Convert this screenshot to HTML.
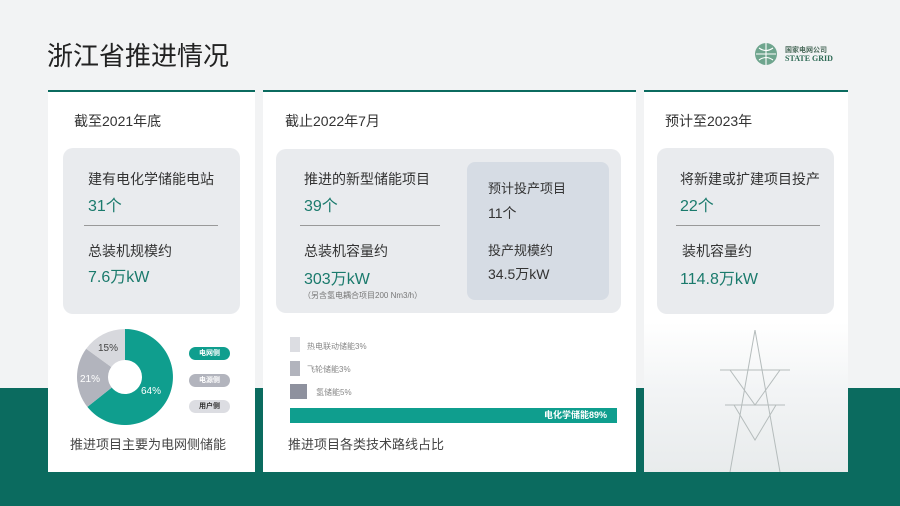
<!DOCTYPE html>
<html><head><meta charset="utf-8"><style>
*{margin:0;padding:0;box-sizing:border-box}
body{width:900px;height:506px;position:relative;overflow:hidden;background:#f2f3f4;font-family:"Liberation Sans","Noto Sans CJK SC",sans-serif;color:#333}
.abs{position:absolute}
.band{left:0;top:388px;width:900px;height:118px;background:#0b6b5f}
.card{background:#fff;border-top:2px solid #0b6b5f;top:90px;height:382px}
.panel{background:#e9ebee;border-radius:10px}
.t{font-size:14px;color:#333;white-space:nowrap}
.g{color:#1a7a6c;font-size:16px;white-space:nowrap}
.hr{height:1px;background:#999}
</style></head><body>
<div class="abs band"></div>
<div class="abs" style="left:47px;top:36px;font-size:26px;color:#222">浙江省推进情况</div>
<svg class="abs" style="left:754px;top:42px" width="24" height="24"><circle cx="12" cy="12" r="11" fill="#6fa58e"/><path d="M2 12h20M12 1v22M5 6q7 5 14 0M5 18q7-5 14 0" stroke="#fff" stroke-width="1.1" fill="none"/></svg>
<div class="abs" style="left:785px;top:45px;font-size:7px;color:#4a6a5a;font-weight:bold">国家电网公司</div>
<div class="abs" style="left:785px;top:54px;font-size:8px;color:#2e6a55;font-weight:bold;font-family:'Liberation Serif',serif">STATE GRID</div>

<div class="abs card" style="left:48px;width:207px"></div>
<div class="abs card" style="left:263px;width:373px"></div>
<div class="abs card" style="left:644px;width:204px;background:linear-gradient(#fff 0,#fff 230px,#f2f4f5 300px,#e8ebec 382px)"></div>
<svg class="abs" style="left:700px;top:330px" width="110" height="142"><g stroke="#b5bcbc" stroke-width="1" fill="none"><path d="M55 0L30 142M55 0L80 142M20 40h70M25 75h60M30 40L55 75L80 40M34 75L55 110L76 75"/></g></svg>

<div class="abs t" style="left:74px;top:111px">截至2021年底</div>
<div class="abs t" style="left:285px;top:111px">截止2022年7月</div>
<div class="abs t" style="left:665px;top:111px">预计至2023年</div>

<div class="abs panel" style="left:63px;top:148px;width:177px;height:166px"></div>
<div class="abs t" style="left:88px;top:169px">建有电化学储能电站</div>
<div class="abs g" style="left:88px;top:192px">31个</div>
<div class="abs hr" style="left:84px;top:225px;width:134px"></div>
<div class="abs t" style="left:88px;top:241px">总装机规模约</div>
<div class="abs g" style="left:88px;top:263px">7.6万kW</div>

<div class="abs panel" style="left:276px;top:149px;width:345px;height:164px"></div>
<div class="abs" style="left:467px;top:162px;width:142px;height:138px;background:#d6dce4;border-radius:8px"></div>
<div class="abs t" style="left:304px;top:169px">推进的新型储能项目</div>
<div class="abs g" style="left:304px;top:192px">39个</div>
<div class="abs hr" style="left:300px;top:225px;width:140px"></div>
<div class="abs t" style="left:304px;top:241px">总装机容量约</div>
<div class="abs g" style="left:304px;top:265px">303万kW</div>
<div class="abs" style="left:303px;top:290px;font-size:8px;color:#777">（另含氢电耦合项目200 Nm3/h）</div>
<div class="abs" style="left:488px;top:178px;font-size:13px">预计投产项目</div>
<div class="abs" style="left:488px;top:203px;font-size:14px">11个</div>
<div class="abs" style="left:488px;top:240px;font-size:13px">投产规模约</div>
<div class="abs" style="left:488px;top:264px;font-size:14px">34.5万kW</div>

<div class="abs panel" style="left:657px;top:148px;width:177px;height:166px"></div>
<div class="abs t" style="left:680px;top:169px">将新建或扩建项目投产</div>
<div class="abs g" style="left:680px;top:192px">22个</div>
<div class="abs hr" style="left:676px;top:225px;width:144px"></div>
<div class="abs t" style="left:682px;top:241px">装机容量约</div>
<div class="abs g" style="left:680px;top:265px">114.8万kW</div>

<svg class="abs" style="left:75px;top:327px" width="100" height="100" viewBox="-50 -50 100 100">
<path d="M0-48A48 48 0 1 1-37.6 29.9L0 0Z" fill="#0f9e8e"/>
<path d="M-37.6 29.9A48 48 0 0 1-38.8-28.2L0 0Z" fill="#b2b4bd"/>
<path d="M-38.8-28.2A48 48 0 0 1 0-48L0 0Z" fill="#d7d8dd"/>
<circle r="17" fill="#fff"/>
<text x="16" y="17" font-size="10" fill="#fff" font-family="Liberation Sans">64%</text>
<text x="-45" y="5" font-size="10" fill="#fff" font-family="Liberation Sans">21%</text>
<text x="-27" y="-26" font-size="10" fill="#444" font-family="Liberation Sans">15%</text>
</svg>
<div class="abs" style="left:189px;top:347px;width:41px;height:13px;border-radius:7px;background:#0f9e8e;color:#fff;font-size:7px;text-align:center;line-height:13px;font-weight:bold">电网侧</div>
<div class="abs" style="left:189px;top:374px;width:41px;height:13px;border-radius:7px;background:#b2b4bd;color:#fff;font-size:7px;text-align:center;line-height:13px;font-weight:bold">电源侧</div>
<div class="abs" style="left:189px;top:400px;width:41px;height:13px;border-radius:7px;background:#dcdde2;color:#333;font-size:7px;text-align:center;line-height:13px;font-weight:bold">用户侧</div>
<div class="abs" style="left:70px;top:434px;font-size:13px;color:#444">推进项目主要为电网侧储能</div>

<div class="abs" style="left:290px;top:337px;width:10px;height:15px;background:#dcdde2"></div>
<div class="abs" style="left:307px;top:341px;font-size:8px;color:#888">热电联动储能3%</div>
<div class="abs" style="left:290px;top:361px;width:10px;height:15px;background:#b2b4bd"></div>
<div class="abs" style="left:307px;top:364px;font-size:8px;color:#888">飞轮储能3%</div>
<div class="abs" style="left:290px;top:384px;width:17px;height:15px;background:#8e919e"></div>
<div class="abs" style="left:316px;top:387px;font-size:8px;color:#888">氢储能5%</div>
<div class="abs" style="left:290px;top:408px;width:327px;height:15px;background:#0f9e8e;color:#fff;font-size:9px;font-weight:bold;text-align:right;padding-right:10px;line-height:15px">电化学储能89%</div>
<div class="abs" style="left:288px;top:434px;font-size:13px;color:#444">推进项目各类技术路线占比</div>
</body></html>
